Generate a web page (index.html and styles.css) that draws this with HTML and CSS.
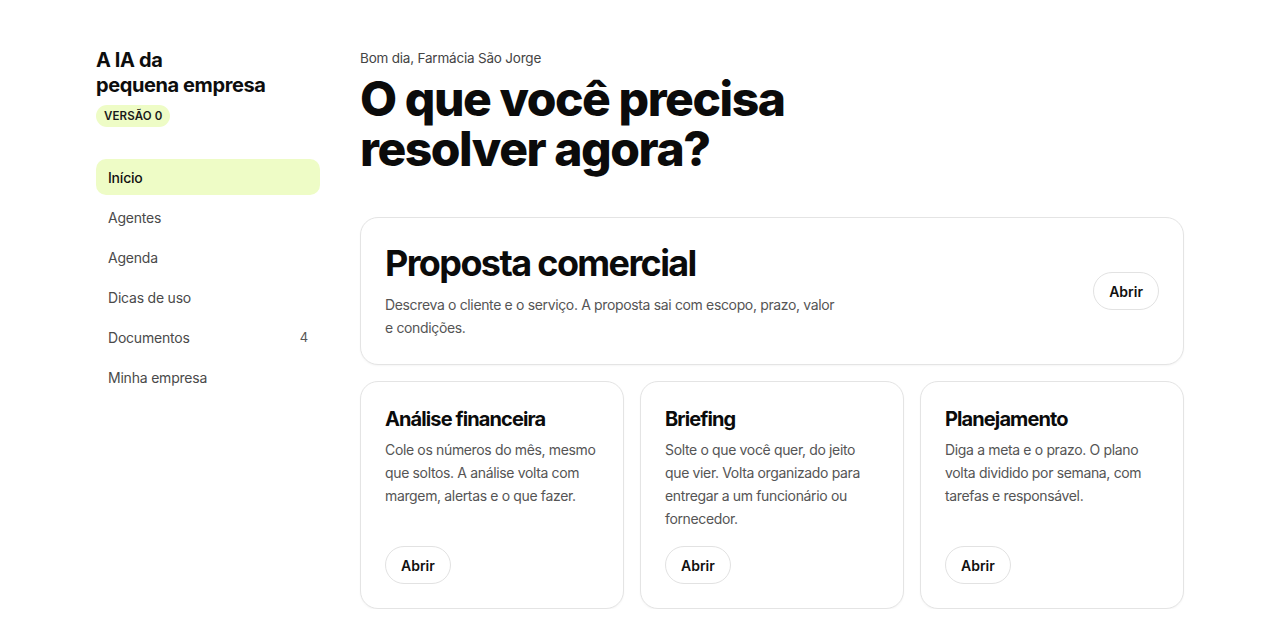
FILE: index.html
```html
<!DOCTYPE html>
<html lang="pt-BR">
<head>
<meta charset="utf-8">
<title>A IA da pequena empresa</title>
<link rel="stylesheet" href="styles.css">
</head>
<body>
<div class="layout">
  <aside class="sidebar">
    <div class="brand">A IA da<br>pequena empresa</div>
    <span class="badge">VERSÃO 0</span>
    <nav class="nav">
      <a class="nav-item active">Início</a>
      <a class="nav-item">Agentes</a>
      <a class="nav-item">Agenda</a>
      <a class="nav-item">Dicas de uso</a>
      <a class="nav-item">Documentos <span class="count">4</span></a>
      <a class="nav-item">Minha empresa</a>
    </nav>
  </aside>
  <main class="main">
    <p class="greeting">Bom dia, Farmácia São Jorge</p>
    <h1 class="headline">O que você precisa<br>resolver agora?</h1>
    <section class="card card-wide">
      <div class="wide-text">
        <h2 class="wide-title">Proposta comercial</h2>
        <p class="desc">Descreva o cliente e o serviço. A proposta sai com escopo, prazo, valor e condições.</p>
      </div>
      <button class="btn">Abrir</button>
    </section>
    <div class="grid">
      <section class="card card-small">
        <h3 class="small-title">Análise financeira</h3>
        <p class="desc">Cole os números do mês, mesmo que soltos. A análise volta com margem, alertas e o que fazer.</p>
        <button class="btn">Abrir</button>
      </section>
      <section class="card card-small">
        <h3 class="small-title">Briefing</h3>
        <p class="desc">Solte o que você quer, do jeito que vier. Volta organizado para entregar a um funcionário ou fornecedor.</p>
        <button class="btn">Abrir</button>
      </section>
      <section class="card card-small">
        <h3 class="small-title">Planejamento</h3>
        <p class="desc">Diga a meta e o prazo. O plano volta dividido por semana, com tarefas e responsável.</p>
        <button class="btn">Abrir</button>
      </section>
    </div>
  </main>
</div>
</body>
</html>
```
FILE: styles.css
```css
* { box-sizing: border-box; }
html, body { margin: 0; padding: 0; background: #fff; }
body {
  font-family: Inter, "Noto Sans", "Liberation Sans", sans-serif;
  color: #111;
  -webkit-font-smoothing: antialiased;
}
.layout {
  width: 1088px;
  margin: 0 auto;
  padding-top: 48px;
  display: flex;
  gap: 40px;
}
.sidebar {
  width: 224px;
  flex: none;
  display: flex;
  flex-direction: column;
  align-items: flex-start;
}
.brand {
  font-size: 20px;
  line-height: 25px;
  font-weight: 700;
  letter-spacing: -0.02em;
  color: #0d0d0d;
}
.badge {
  margin-top: 7px;
  background: #eefcc6;
  border-radius: 11px;
  height: 22px;
  padding: 0 8px;
  display: inline-flex;
  align-items: center;
  font-size: 11.5px;
  font-weight: 600;
  letter-spacing: 0.01em;
  color: #1a1a1a;
}
.nav {
  margin-top: 32px;
  width: 100%;
  display: flex;
  flex-direction: column;
  gap: 4px;
}
.nav-item {
  height: 36px;
  border-radius: 10px;
  padding: 0 12px;
  display: flex;
  align-items: center;
  justify-content: space-between;
  font-size: 14px;
  color: #4a4a4a;
  letter-spacing: -0.015em;
}
.nav-item.active {
  background: #eefcc6;
  color: #111;
  font-weight: 500;
}
.count { font-size: 13px; color: #555; }
.main { flex: 1; min-width: 0; }
.greeting {
  margin: 0;
  font-size: 13.5px;
  line-height: 20px;
  color: #444;
  letter-spacing: -0.015em;
}
.headline {
  margin: 6px 0 0;
  font-size: 48px;
  line-height: 50px;
  font-weight: 800;
  letter-spacing: -0.03em;
  color: #0b0b0b;
}
.card {
  border: 1px solid #e4e4e4;
  border-radius: 18px;
  background: #fff;
  box-shadow: 0 1px 2px rgba(0,0,0,0.04);
}
.card-wide {
  margin-top: 43px;
  padding: 25px 24px 25px 24px;
  display: flex;
  align-items: center;
  justify-content: space-between;
}
.wide-text { max-width: 460px; }
.wide-title {
  margin: 0;
  font-size: 36px;
  line-height: 40px;
  font-weight: 700;
  letter-spacing: -0.045em;
  color: #0b0b0b;
}
.wide-text .desc { margin-top: 10px; }
.desc {
  margin: 0;
  font-size: 14px;
  line-height: 23px;
  color: #555;
  letter-spacing: -0.025em;
}
.btn {
  height: 38px;
  padding: 0 15px;
  border: 1px solid #e2e2e2;
  border-radius: 19px;
  background: #fff;
  font-family: inherit;
  font-size: 14px;
  font-weight: 600;
  color: #111;
  flex: none;
}
.grid {
  margin-top: 16px;
  display: grid;
  grid-template-columns: repeat(3, 1fr);
  gap: 16px;
  height: 228px;
}
.card-small {
  padding: 24px;
  display: flex;
  flex-direction: column;
  align-items: flex-start;
}
.small-title {
  margin: 0;
  font-size: 20px;
  line-height: 26px;
  font-weight: 700;
  letter-spacing: -0.045em;
  color: #0b0b0b;
}
.card-small .desc { margin-top: 6px; }
.card-small .btn { margin-top: auto; }
```
